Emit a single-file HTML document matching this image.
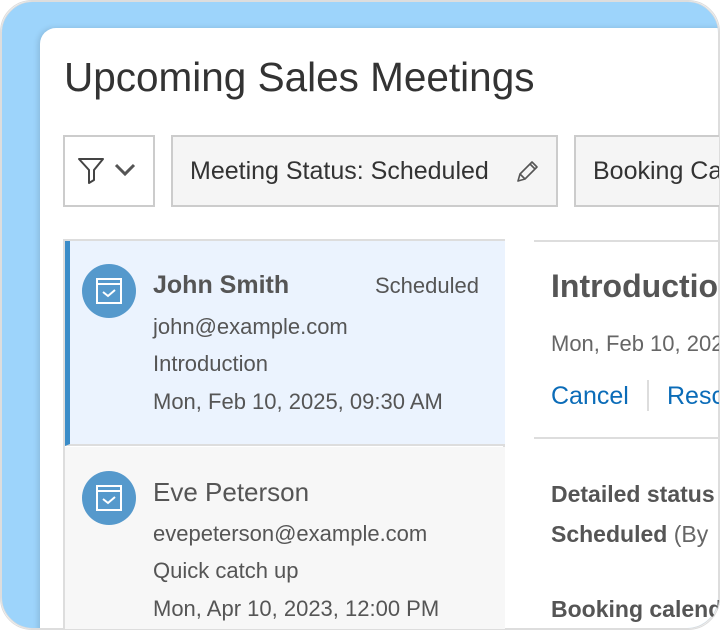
<!DOCTYPE html>
<html><head><meta charset="utf-8"><style>
*{margin:0;padding:0;box-sizing:border-box}
body{width:720px;height:630px;overflow:hidden;background:#fff;font-family:"Liberation Sans",sans-serif;color:#444;position:relative}
.wrap{position:absolute;left:0;top:0;width:720px;height:630px;overflow:hidden;border-radius:32px}
.frame{position:absolute;left:1px;top:1px;width:718px;height:628px;border-radius:32px;background:#9dd4fb;border:1px solid #ddd;overflow:hidden}
.card{position:absolute;left:38px;top:26px;width:700px;height:620px;background:#fff;border-radius:16px;box-shadow:-2px 0 6px rgba(0,0,0,.12)}
.a{position:absolute;white-space:nowrap}
h1{position:absolute;left:64px;top:54px;font-size:40.5px;font-weight:normal;color:#333;white-space:nowrap}
.box{position:absolute;border:2px solid #ccc;background:#f5f5f5;overflow:hidden;white-space:nowrap}
.chip{font-size:25px;color:#333;line-height:68px}
.list{position:absolute;left:63px;top:239px;width:442px;height:400px;border:2px solid #ddd}
.it1{position:absolute;left:0;top:0;width:440px;height:205px;background:#ebf3fe;border-left:5px solid #3a8cc8;border-bottom:2px solid #ddd}
.it2{position:absolute;left:0;top:206px;width:440px;height:200px;background:#f7f7f7}
.ic{position:absolute;width:54px;height:54px;border-radius:50%;background:#5599cc}
.t{font-size:22px;color:#555}
</style></head><body>
<div class="wrap">
<div class="frame">
<div class="card"></div>
</div>
<h1>Upcoming Sales Meetings</h1>
<div class="box" style="left:63px;top:135px;width:92px;height:72px;background:#fff">
<svg width="92" height="70" viewBox="0 0 92 70" style="position:absolute;left:-2px;top:-2px"><path d="M16 24h24l-9 11v10l-5 3v-13z" fill="none" stroke="#444" stroke-width="2" stroke-linejoin="round"/><path d="M53 30l9 9 9-9" fill="none" stroke="#555" stroke-width="3"/></svg>
</div>
<div class="box chip" style="left:171px;top:135px;width:387px;height:72px"><span style="position:absolute;left:17px;top:0">Meeting Status: Scheduled</span>
<svg width="28" height="28" viewBox="0 0 28 28" style="position:absolute;left:340px;top:21px"><path d="M5 23l2-7L19 4l5 5-12 12z M7 16l5 5 M17 6l5 5" fill="none" stroke="#555" stroke-width="1.6" stroke-linejoin="round"/></svg></div>
<div class="box chip" style="left:574px;top:135px;width:200px;height:72px"><span style="position:absolute;left:17px;top:0">Booking Calendar</span></div>
<div class="list">
<div class="it1">
<div class="ic" style="left:12px;top:23px"><svg width="54" height="54" viewBox="0 0 54 54"><rect x="15" y="15" width="24" height="24" fill="none" stroke="#fff" stroke-width="2"/><path d="M15 20h24" stroke="#fff" stroke-width="2"/><path d="M21 28l5 4 7-6" fill="none" stroke="#fff" stroke-width="2"/></svg></div>
<div class="a" style="left:83px;top:30px;font-size:25px;font-weight:bold;color:#555">John Smith</div>
<div class="a t" style="left:305px;top:32px">Scheduled</div>
<div class="a t" style="left:83px;top:73px">john@example.com</div>
<div class="a t" style="left:83px;top:110px">Introduction</div>
<div class="a t" style="left:83px;top:148px">Mon, Feb 10, 2025, 09:30 AM</div>
</div>
<div class="it2">
<div class="ic" style="left:17px;top:24px"><svg width="54" height="54" viewBox="0 0 54 54"><rect x="15" y="15" width="24" height="24" fill="none" stroke="#fff" stroke-width="2"/><path d="M15 20h24" stroke="#fff" stroke-width="2"/><path d="M21 28l5 4 7-6" fill="none" stroke="#fff" stroke-width="2"/></svg></div>
<div class="a" style="left:88px;top:30px;font-size:26px;color:#555">Eve Peterson</div>
<div class="a t" style="left:88px;top:74px">evepeterson@example.com</div>
<div class="a t" style="left:88px;top:111px">Quick catch up</div>
<div class="a t" style="left:88px;top:149px">Mon, Apr 10, 2023, 12:00 PM</div>
</div>
</div>
<div style="position:absolute;left:534px;top:240px;width:200px;border-top:2px solid #ddd"></div>
<div class="a" style="left:551px;top:268px;font-size:32px;font-weight:bold;color:#555">Introduction</div>
<div class="a t" style="left:551px;top:331px;color:#666">Mon, Feb 10, 2025</div>
<div class="a" style="left:551px;top:382px;font-size:25px;color:#0b6cb8">Cancel</div>
<div style="position:absolute;left:647px;top:380px;height:31px;border-left:2px solid #ddd"></div>
<div class="a" style="left:667px;top:382px;font-size:25px;color:#0b6cb8">Reschedule</div>
<div style="position:absolute;left:534px;top:437px;width:200px;border-top:2px solid #ddd"></div>
<div class="a" style="left:551px;top:481px;font-size:23px;font-weight:bold;color:#555">Detailed status</div>
<div class="a" style="left:551px;top:521px;font-size:23px;color:#666"><b style="color:#555">Scheduled</b> (By</div>
<div class="a" style="left:551px;top:596px;font-size:23px;font-weight:bold;color:#555">Booking calendar</div>
</div>
<div style="position:absolute;left:0;top:0;width:720px;height:630px;border-radius:32px;border:1px solid #ddd;pointer-events:none"></div>
</body></html>
